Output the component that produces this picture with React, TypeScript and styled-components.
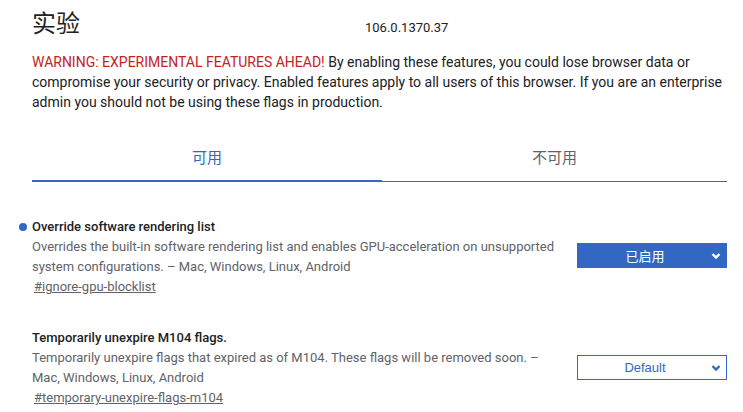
import styled, { createGlobalStyle } from 'styled-components'

const GlobalStyle = createGlobalStyle`
  body {
    margin: 0;
    background: #fff;
    font-family: Roboto, "Noto Sans CJK SC", sans-serif;
    color: #202124;
  }
`

interface Flag {
  title: string
  description: string
  link: string
  value: string
  enabled?: boolean
}

const flags: Flag[] = [
  {
    title: 'Override software rendering list',
    description:
      'Overrides the built-in software rendering list and enables GPU-acceleration on unsupported system configurations. – Mac, Windows, Linux, Android',
    link: '#ignore-gpu-blocklist',
    value: '已启用',
    enabled: true,
  },
  {
    title: 'Temporarily unexpire M104 flags.',
    description:
      'Temporarily unexpire flags that expired as of M104. These flags will be removed soon. – Mac, Windows, Linux, Android',
    link: '#temporary-unexpire-flags-m104',
    value: 'Default',
  },
]

const Chevron = ({ color }: { color: string }) => (
  <svg width="10" height="7" viewBox="0 0 10 7">
    <path d="M1.5 1.5 L5 5 L8.5 1.5" fill="none" stroke={color} strokeWidth="2.4" />
  </svg>
)

const App = () => {
  return (
    <Page>
      <GlobalStyle />
      <Header>
        <Title>实验</Title>
        <Version>106.0.1370.37</Version>
      </Header>
      <Warning>
        <Red>WARNING: EXPERIMENTAL FEATURES AHEAD!</Red> By enabling these features, you could
        lose browser data or compromise your security or privacy. Enabled features apply to all
        users of this browser. If you are an enterprise admin you should not be using these flags
        in production.
      </Warning>

      <Tabs>
        <Tab $active>可用</Tab>
        <Tab>不可用</Tab>
      </Tabs>

      <FlagList>
        {flags.map((f) => (
          <FlagRow key={f.link}>
            <FlagText>
              <FlagTitle $enabled={f.enabled}>{f.title}</FlagTitle>
              <FlagDesc>{f.description}</FlagDesc>
              <FlagLink href={f.link}>{f.link}</FlagLink>
            </FlagText>
            <Select $enabled={f.enabled}>
              <span>{f.value}</span>
              <ChevronBox>
                <Chevron color={f.enabled ? '#fff' : '#3367c4'} />
              </ChevronBox>
            </Select>
          </FlagRow>
        ))}
      </FlagList>
    </Page>
  )
}

export default App

const Page = styled.div`
  width: 695px;
  padding: 0 16px 0 32px;
`

const Header = styled.div`
  display: grid;
  grid-template-columns: 333px auto;
  align-items: end;
  padding-top: 6px;
`

const Title = styled.h1`
  margin: 0;
  font-size: 24px;
  font-weight: 400;
  line-height: 32px;
  font-family: "Noto Sans CJK SC", sans-serif;
  color: #202124;
`

const Version = styled.div`
  font-size: 13px;
  color: #202124;
  line-height: 16px;
  padding-bottom: 2px;
`

const Warning = styled.p`
  margin: 14px 0 0;
  font-size: 14px;
  line-height: 20px;
  color: #202124;
`

const Red = styled.span`
  color: #c5221f;
`

const Tabs = styled.div`
  display: grid;
  grid-template-columns: 350px 1fr;
  align-items: end;
  margin-top: 24px;
`

const Tab = styled.div<{ $active?: boolean }>`
  text-align: center;
  font-size: 15px;
  line-height: 22px;
  font-family: "Noto Sans CJK SC", sans-serif;
  color: ${(p) => (p.$active ? '#3367c4' : '#5f6368')};
  padding: ${(p) => (p.$active ? '10px 0 12px' : '10px 0 13px')};
  border-bottom: ${(p) => (p.$active ? '2px solid #3367c4' : '1px solid #5f6368')};
`

const FlagList = styled.div`
  display: flex;
  flex-direction: column;
  gap: 31px;
  margin-top: 35px;
`

const FlagRow = styled.div`
  display: flex;
  align-items: center;
  gap: 20px;
`

const FlagText = styled.div`
  flex: 1;
  display: flex;
  flex-direction: column;
`

const FlagTitle = styled.div<{ $enabled?: boolean }>`
  position: relative;
  font-size: 13px;
  font-weight: 500;
  line-height: 20px;
  color: #202124;

  &::before {
    content: '';
    display: ${(p) => (p.$enabled ? 'block' : 'none')};
    position: absolute;
    left: -13px;
    top: 6px;
    width: 8px;
    height: 8px;
    border-radius: 50%;
    background: #3367c4;
  }
`

const FlagDesc = styled.div`
  font-size: 13px;
  line-height: 20px;
  color: #5f6368;
`

const FlagLink = styled.a`
  align-self: flex-start;
  margin-left: 2px;
  font-size: 13px;
  line-height: 20px;
  color: #5f6368;
  text-decoration: underline;
`

const Select = styled.div<{ $enabled?: boolean }>`
  box-sizing: border-box;
  width: 150px;
  height: 25px;
  flex-shrink: 0;
  position: relative;
  display: flex;
  align-items: center;
  justify-content: center;
  padding-right: 14px;
  margin-bottom: ${(p) => (p.$enabled ? '3px' : '1px')};
  font-family: "Liberation Sans", "Noto Sans CJK SC", sans-serif;
  font-size: 13px;
  background: ${(p) => (p.$enabled ? '#3367c4' : '#fff')};
  color: ${(p) => (p.$enabled ? '#fff' : '#3367c4')};
  border: 1px solid #3367c4;
`

const ChevronBox = styled.span`
  position: absolute;
  right: 5px;
  top: 50%;
  transform: translateY(-50%);
  display: flex;
`
